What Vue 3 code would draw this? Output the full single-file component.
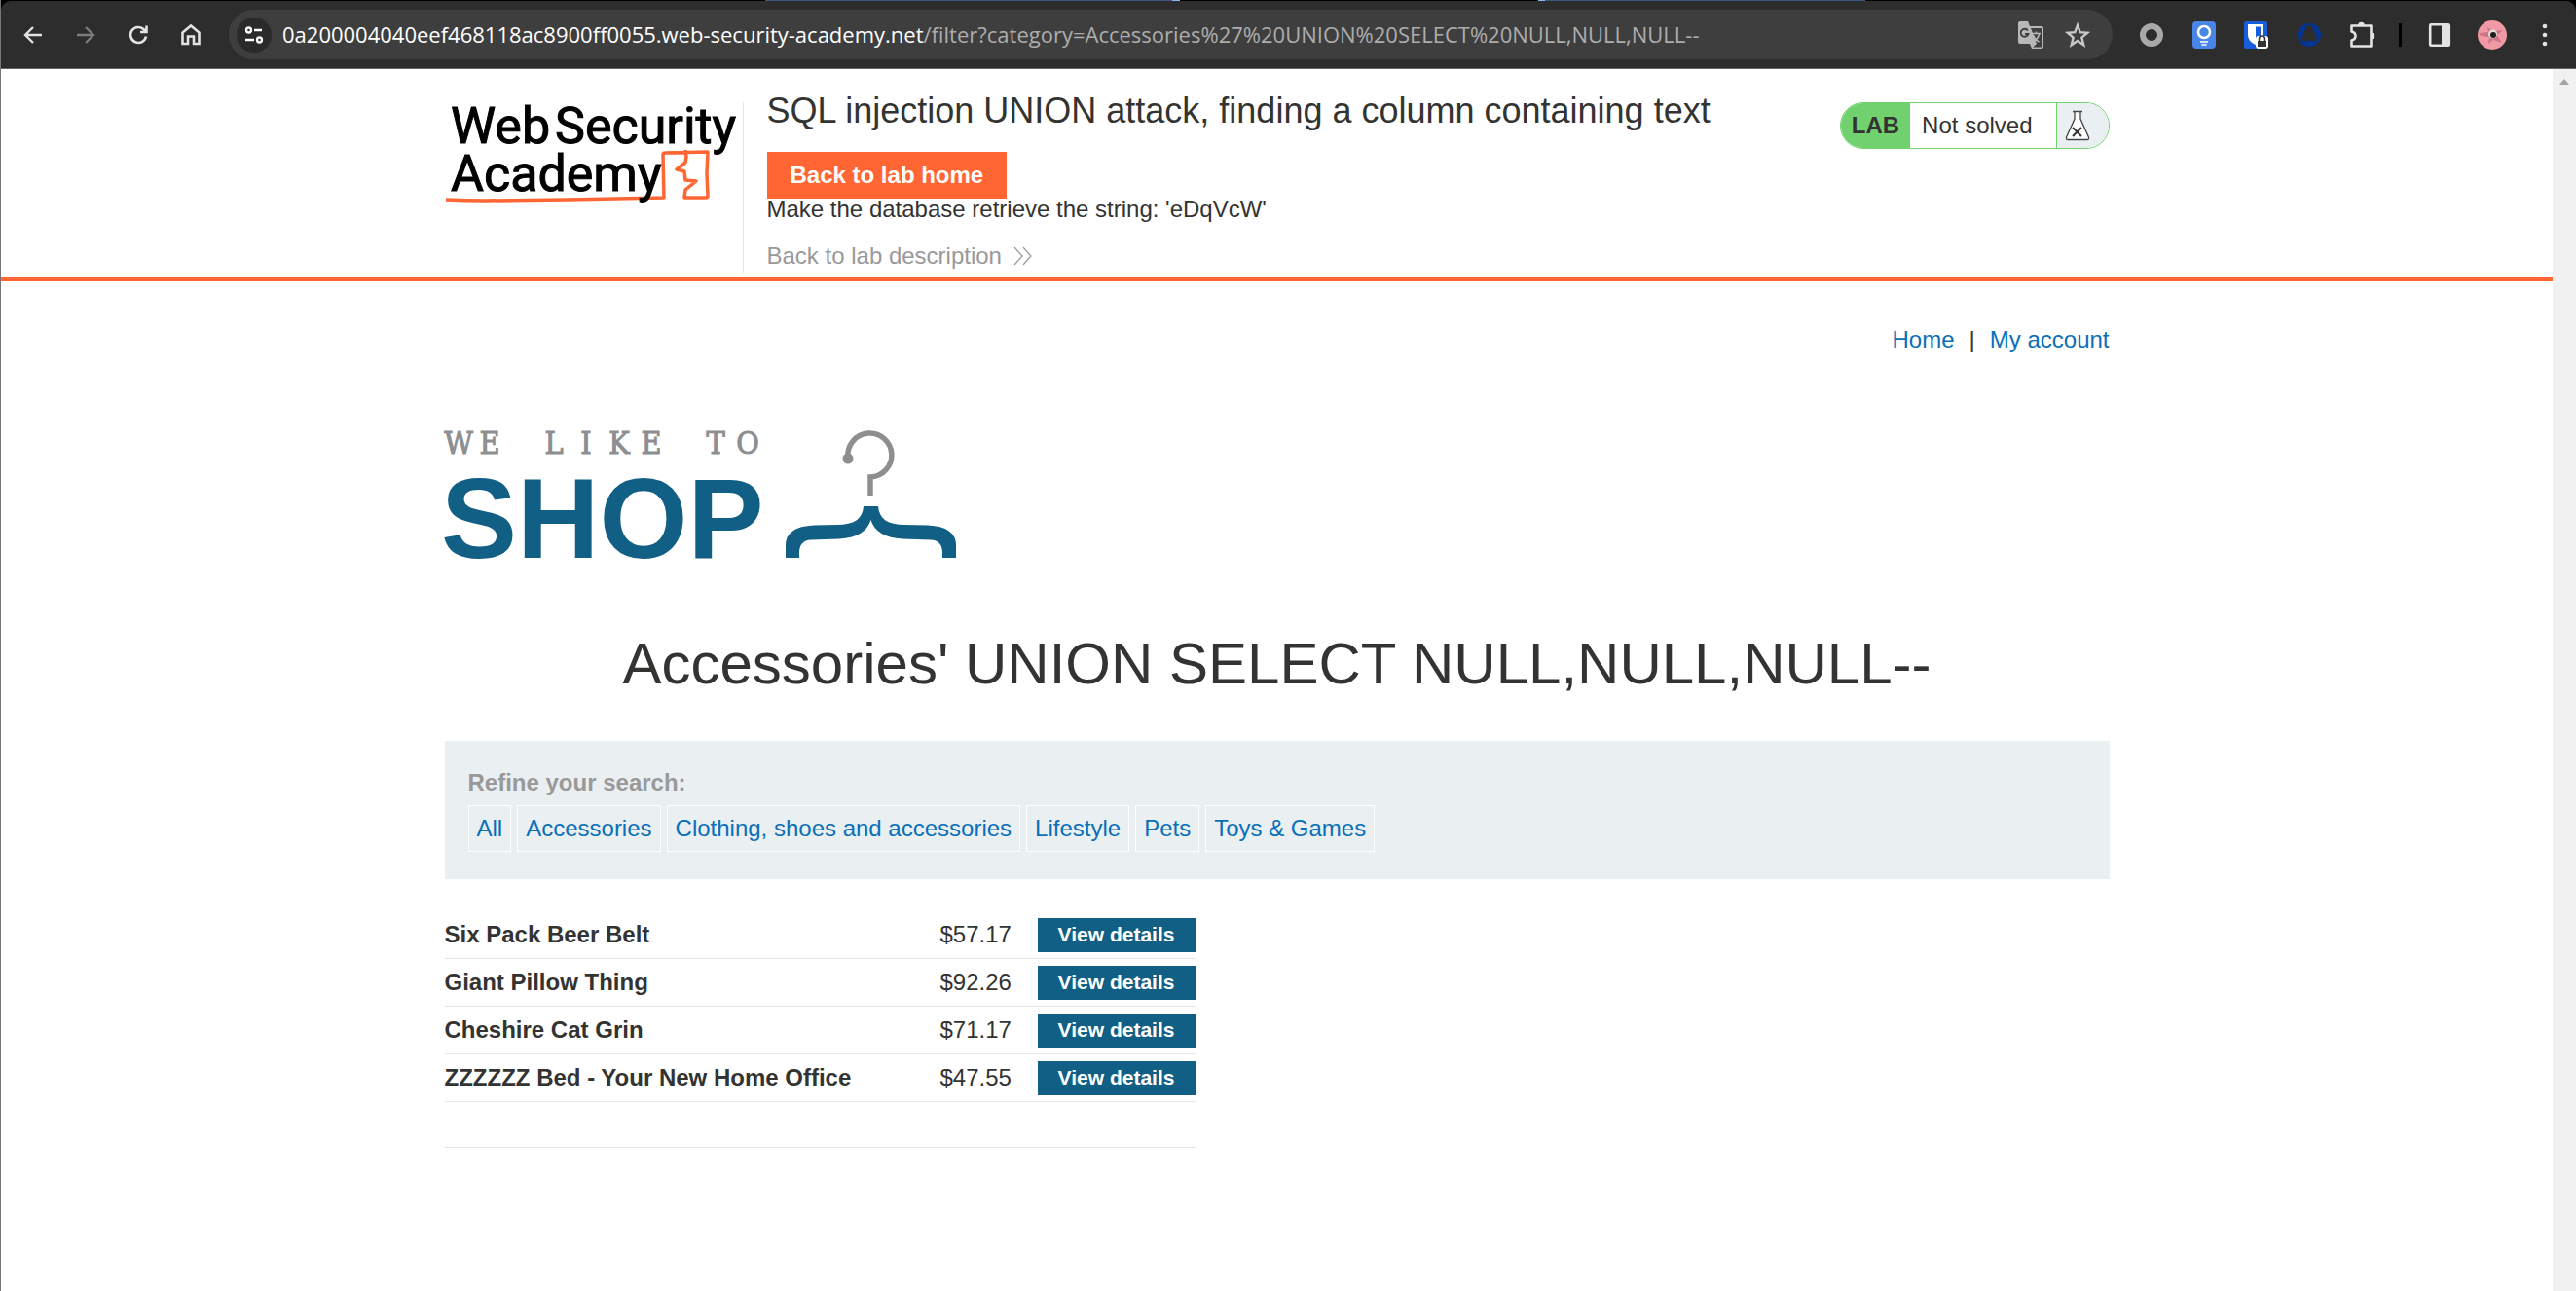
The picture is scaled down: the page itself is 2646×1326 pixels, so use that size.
<script setup>
const categories = ['All', 'Accessories', 'Clothing, shoes and accessories', 'Lifestyle', 'Pets', 'Toys & Games']
const products = [
  { name: 'Six Pack Beer Belt', price: '$57.17' },
  { name: 'Giant Pillow Thing', price: '$92.26' },
  { name: 'Cheshire Cat Grin', price: '$71.17' },
  { name: 'ZZZZZZ Bed - Your New Home Office', price: '$47.55' },
]
</script>

<template>
  <div class="window">
    <div class="chrome">
      <div class="tab-strip"></div>
      <div class="toolbar">
        <div class="nav">
          <button class="icon" aria-label="Back"><svg width="24" height="24" viewBox="0 0 24 24" fill="none" stroke="#e3e3e3" stroke-width="2.4"><path d="M21 12H4M12 4l-8 8 8 8" /></svg></button>
          <button class="icon" aria-label="Forward"><svg width="24" height="24" viewBox="0 0 24 24" fill="none" stroke="#7c7c7c" stroke-width="2.4"><path d="M3 12h17M12 4l8 8-8 8" /></svg></button>
          <button class="icon" aria-label="Reload"><svg width="24" height="24" viewBox="0 0 24 24" fill="none" stroke="#e3e3e3" stroke-width="2.6"><path d="M20 13.500a8 8 0 1 1-2-7l2.500 2.500M20.500 2.500v6.500H14" /></svg></button>
          <button class="icon" aria-label="Home"><svg width="24" height="24" viewBox="0 0 24 24" fill="none" stroke="#e3e3e3" stroke-width="2.6"><path d="M3.500 21V9.500l8.500-7 8.500 7V21h-5.500v-7.500h-6V21z" /></svg></button>
        </div>
        <div class="omnibox">
          <button class="site" aria-label="Site information"><svg width="24" height="24" viewBox="0 0 24 24" fill="none" stroke="#fff" stroke-width="2.300"><circle cx="6.500" cy="7" r="2.500" /><path d="M12 7h8M3 17h9" /><circle cx="17.500" cy="17" r="2.500" /></svg></button>
          <div class="url"><span>0a200004040eef468118ac8900ff0055.web-security-academy.net</span>/filter?category=Accessories%27%20UNION%20SELECT%20NULL,NULL,NULL--</div>
          <div class="actions">
            <button class="icon" aria-label="Translate"><svg width="26" height="28" viewBox="0 0 26 28"><path d="M2 0h8l2 5h12q2 0 2 2v19q0 2-2 2H14l-2-5H2q-2 0-2-2V2q0-2 2-2z" fill="#b8b8b8" /><path d="M13 7h10.500q1 0 1 1v17q0 1.500-1 1.500H15l4-3.500z" fill="#3e3e3e" /><path d="M10 9.500a4 4 0 1 0 .5 3.500H7" fill="none" stroke="#3e3e3e" stroke-width="1.800" /><path d="M14 12.500h9M18.500 10.500v2M21.500 13q-1 5-6 8M15.500 14q2 5 6 7" fill="none" stroke="#b8b8b8" stroke-width="1.500" /></svg></button>
            <button class="icon" aria-label="Bookmark"><svg width="26" height="28" viewBox="0 0 26 28" fill="none" stroke="#c7c7c7" stroke-width="2.400"><path d="M13 4l2.700 7.200 7.600.5-5.900 4.900 1.900 7.600-6.300-4.200-6.300 4.200 1.900-7.600-5.900-4.900 7.600-.5z" /></svg></button>
          </div>
        </div>
        <div class="extensions">
          <button class="icon" aria-label="Extension"><svg width="24" height="28" viewBox="0 0 24 28"><circle cx="12" cy="14" r="9" fill="none" stroke="#a9a9a9" stroke-width="6" /></svg></button>
          <button class="icon" aria-label="Ideas"><svg width="24" height="28" viewBox="0 0 24 28"><rect width="24" height="28" rx="4" fill="#4a86e8" /><circle cx="12" cy="11" r="6" fill="none" stroke="#fff" stroke-width="2.500" /><path d="M8 21h8M9.500 24h5" stroke="#fff" stroke-width="1.600" /></svg></button>
          <button class="icon" aria-label="Password manager"><svg width="26" height="28" viewBox="0 0 26 28"><rect width="24" height="28" rx="2" fill="#175ddc" /><path d="M4 3h15v11q0 6-7.500 10Q4 20 4 14z" fill="#fff" /><path d="M12 5.500h5V14q0 4-5 7z" fill="#175ddc" /><rect x="12" y="15" width="13" height="13" rx="3" fill="#fff" /><path d="M15.500 20v-2a3 3 0 0 1 6 0v2" fill="none" stroke="#333" stroke-width="1.500" /><rect x="14" y="20" width="9" height="6" fill="#333" /></svg></button>
          <button class="icon" aria-label="Extension"><svg width="24" height="28" viewBox="0 0 24 28"><circle cx="12" cy="14" r="12" fill="#043391" /><path d="M12 4q3 0 4 4l4 10q0 3-3 2.500-5-2-10 0-3 .5-3-2.500L8 8q1-4 4-4z" fill="#2d2d2d" /></svg></button>
          <button class="icon" aria-label="Extensions"><svg width="28" height="28" viewBox="0 0 28 28" fill="none" stroke="#e3e3e3" stroke-width="2.600" stroke-linejoin="round"><path d="M3.500 4.500h20v21h-20v-6q4-1 4-4.500t-4-4.500z" /><path d="M11 4a2.500 2.500 0 0 1 5 0zM24 12.500a2.500 2.500 0 0 1 0 5z" fill="#e3e3e3" stroke-width="1.500" /></svg></button>
          <span class="divider"></span>
          <button class="icon" aria-label="Side panel"><svg width="24" height="26" viewBox="0 0 24 26"><rect x="2.200" y="2.200" width="19.600" height="21.600" rx="1" fill="none" stroke="#e3e3e3" stroke-width="2.600" /><path d="M14 2h8v22h-8z" fill="#e3e3e3" /></svg></button>
          <button class="icon" aria-label="Profile"><svg width="30" height="30" viewBox="0 0 30 30"><circle cx="15" cy="15" r="15" fill="#f09aa6" /><path d="M1 13l10-1-1-5 6 4 10-1-6 5 5 8-9-3-5 4 1-7-9-1z" fill="#cf7485" /><circle cx="15.500" cy="14" r="4.500" fill="#e4dcdc" /><circle cx="16" cy="15" r="3" fill="#1d1d1d" /></svg></button>
          <button class="icon" aria-label="Menu"><svg width="6" height="26" viewBox="0 0 6 26" fill="#e3e3e3"><circle cx="3" cy="4" r="2.300" /><circle cx="3" cy="13" r="2.300" /><circle cx="3" cy="22" r="2.300" /></svg></button>
        </div>
      </div>
    </div>

    <div class="viewport">
      <div class="page">
        <header class="lab-header">
          <div class="container header-row">
            <div class="academy">
              <svg width="300" height="110" viewBox="0 0 300 110" role="img" aria-label="Web Security Academy">
                <path d="M1 100q20 1 40 1l85-1 99-2-1-44q0-2 2-2l44-1-1 22 1 23q0 2-2 2h-22l1-8 11-9-11-1-1-9-8-2 9-7 1-6-1-7" fill="none" stroke="#ff6633" stroke-width="3.500" stroke-linejoin="round" />
                <text x="6" y="42">Web</text>
                <text x="113" y="42">Security</text>
                <text x="6" y="91">Academy</text>
              </svg>
            </div>
            <div class="lab-title">
              <h2>SQL injection UNION attack, finding a column containing text</h2>
              <a class="lab-home" href="#">Back to lab home</a>
              <p>Make the database retrieve the string: 'eDqVcW'</p>
              <a class="description" href="#">Back to lab description <svg width="20" height="20" viewBox="0 0 20 20" fill="none" stroke="#999" stroke-width="1.200"><path d="M1 1l8 9-8 9M10 1l8 9-8 9" /></svg></a>
            </div>
            <div class="status">
              <strong>LAB</strong>
              <span>Not solved</span>
              <div class="flask"><svg width="26" height="32" viewBox="0 0 26 32"><path d="M8 1.500h10M10 2v7L1.500 28q-.5 2.500 1.500 2.500h20q2 0 1.500-2.500L16 9V2" fill="#fff" stroke="#444" stroke-width="1.300" /><path d="M8 18l9 9M17 18l-9 9" stroke="#333" stroke-width="2" /></svg></div>
            </div>
          </div>
        </header>

        <main class="container">
          <nav class="account"><a href="#">Home</a><span>|</span><a href="#">My account</a></nav>
          <svg class="shop-logo" width="530" height="140" viewBox="0 0 530 140" role="img" aria-label="We like to shop">
            <text x="14 46 79 112 145 179 212 245 278 311" y="28" class="tagline">WE LIKE TO</text>
            <text x="-4" y="135" class="shop">SHOP</text>
            <path d="M414 32a22.500 22.500 0 1 1 23 20v19" fill="none" stroke="#8d8e90" stroke-width="5.500" />
            <circle cx="414" cy="33" r="5.500" fill="#8d8e90" />
            <path d="M430 82C429 95 420 101 403 101L379 101.500Q350 103 350 122V135H364V130Q364 117 376 116.500L405 115.500Q432 114 437.500 96Q443 114 470 115.500L499 116.500Q511 117 511 130V135H525V122Q525 103 496 101.500L472 101C455 101 446 95 445 82z" fill="#115f84" />
          </svg>
          <h1>Accessories' UNION SELECT NULL,NULL,NULL--</h1>
          <section class="filters">
            <strong>Refine your search:</strong>
            <div class="tags"><a v-for="c in categories" :key="c" href="#">{{ c }}</a></div>
          </section>
          <table class="products">
            <tbody>
              <tr v-for="p in products" :key="p.name">
                <th scope="row">{{ p.name }}</th>
                <td class="price">{{ p.price }}</td>
                <td class="action"><a href="#">View details</a></td>
              </tr>
              <tr><td class="blank" colspan="3"></td></tr>
            </tbody>
          </table>
        </main>
      </div>
      <div class="scrollbar"><svg width="24" height="24" viewBox="0 0 24 24"><path d="M7 16l5-6 5 6z" fill="#a3a3a3" /></svg></div>
    </div>
  </div>
</template>

<style>
body { background: #fff; }
</style>

<style scoped>
.window { display: flex; flex-direction: column; min-height: 100vh; box-sizing: border-box; border-left: 1px solid #777; font-family: "Liberation Sans", Arial, sans-serif; font-size: 24px; color: #333332; }
.chrome { background: #000; }
.tab-strip { height: 1px; background: linear-gradient(90deg, #000 0 29.67%, #42597f 29.67% 45.5%, #8ab4f8 45.5% 45.77%, #000 45.77% 59.71%, #8ab4f8 59.71% 59.98%, #42597f 59.98% 72.4%, #000 72.4%); }
.toolbar { display: flex; align-items: center; height: 70px; box-sizing: border-box; background: #2d2d2d; border-bottom: 1px solid #666; border-radius: 10px 10px 0 0; }
.icon { display: flex; justify-content: center; padding: 0; border: 0; background: none; }
.nav { display: flex; gap: 30px; padding-left: 21px; }
.omnibox { flex: 1; display: flex; align-items: center; gap: 11px; height: 51px; box-sizing: border-box; margin-left: 27px; padding: 0 23px 0 8px; border-radius: 26px; background: #3e3e3e; }
.site { display: flex; align-items: center; justify-content: center; width: 36px; height: 36px; padding: 0; border: 0; border-radius: 50%; background: #2a2a2a; }
.url { flex: 1; margin-top: -2px; white-space: nowrap; font-family: "Open Sans", sans-serif; font-size: 22px; color: #adadad; }
.url span { color: #fff; }
.actions { display: flex; gap: 22px; }
.extensions { display: flex; align-items: center; padding: 0 5px 0 13px; }
.extensions .icon { width: 54px; }
.divider { width: 3px; height: 24px; margin: 0 12px 0 11px; background: #000; }
.viewport { flex: 1; display: flex; }
.page { flex: 1; }
.scrollbar { width: 24px; background: #f1f1f1; }
.container { width: 1710px; max-width: 100%; margin: 0 auto; }
.lab-header { padding: 34px 0 5px; border-bottom: 4px solid #ff6633; }
.header-row { display: flex; align-items: flex-start; }
.academy { width: 306px; height: 175px; border-right: 1px solid #e6e6e6; }
.academy svg { overflow: visible; }
.academy text { font-family: Roboto, sans-serif; font-size: 52px; fill: #000; stroke: #000; stroke-width: 1px; }
.lab-title { flex: 1; padding-left: 24px; }
h2 { margin: -13px 0 20px; font-size: 36px; font-weight: 400; line-height: 44px; }
.lab-home { display: inline-block; padding: 0 24px; line-height: 48px; background: #ff6633; color: #fff; font-weight: 700; text-decoration: none; }
.lab-title p { margin: 0; line-height: 22px; }
.description { display: flex; align-items: center; gap: 12px; margin-top: 23px; line-height: 28px; color: #999; text-decoration: none; }
.status { display: flex; height: 48px; box-sizing: border-box; border: 1px solid #72d16f; border-radius: 24px; overflow: hidden; line-height: 46px; }
.status strong { padding: 0 11px; background: #72d16f; }
.status span { padding: 0 24px 0 12px; border-right: 1px solid #72d16f; }
.flask { display: flex; align-items: center; padding: 0 19px 0 8px; background: #eaeff2; }
.account { display: flex; justify-content: flex-end; gap: 15px; padding-top: 45px; line-height: 30px; }
a { color: #0b6fb8; text-decoration: none; }
.shop-logo { display: block; margin-top: 74px; overflow: visible; }
.tagline { font-family: "DejaVu Serif Condensed", "DejaVu Serif", serif; font-size: 32px; fill: #8d8e90; stroke: #8d8e90; stroke-width: 1px; text-anchor: middle; }
.shop { font-weight: 700; font-size: 117px; fill: #115f84; }
h1 { margin: 68px 0 43px; text-align: center; font-size: 60px; font-weight: 400; line-height: 72px; }
.filters { padding: 28px 24px; background: #eaeff2; }
.filters strong { display: block; line-height: 30px; color: #999; }
.tags { display: flex; gap: 6px; margin-top: 8px; }
.tags a { padding: 0 8px; border: 1px solid #fff; line-height: 46px; }
.products { width: 771px; margin-top: 33px; border-collapse: collapse; }
.products td, .products th { height: 48px; padding: 0; border-bottom: 1px solid #e6e6e6; text-align: left; }
.products .blank { height: 46px; }
.price { width: 100px; }
.action { width: 162px; }
.action a { display: block; height: 35px; line-height: 34px; background: #115f84; color: #fff; font-size: 21px; font-weight: 700; text-align: center; }
</style>
